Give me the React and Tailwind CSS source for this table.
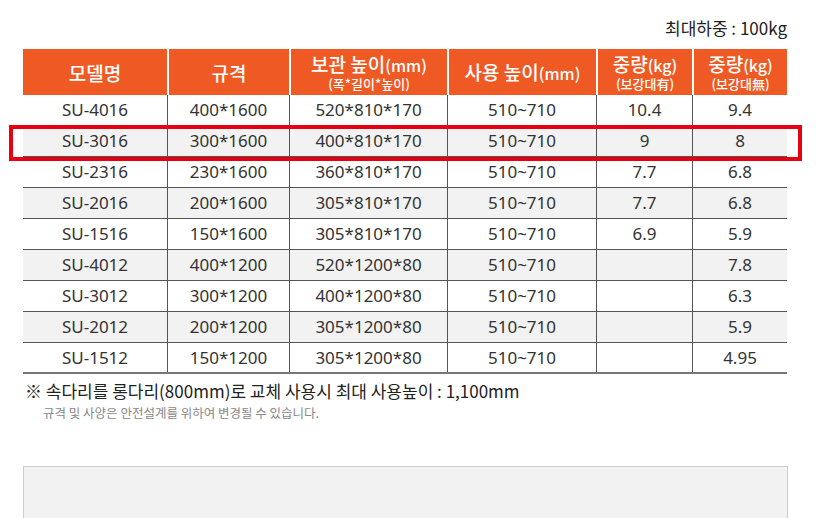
import React from "react";

const rows = [
  ["SU-4016", "400*1600", "520*810*170", "510~710", "10.4", "9.4"],
  ["SU-3016", "300*1600", "400*810*170", "510~710", "9", "8"],
  ["SU-2316", "230*1600", "360*810*170", "510~710", "7.7", "6.8"],
  ["SU-2016", "200*1600", "305*810*170", "510~710", "7.7", "6.8"],
  ["SU-1516", "150*1600", "305*810*170", "510~710", "6.9", "5.9"],
  ["SU-4012", "400*1200", "520*1200*80", "510~710", "", "7.8"],
  ["SU-3012", "300*1200", "400*1200*80", "510~710", "", "6.3"],
  ["SU-2012", "200*1200", "305*1200*80", "510~710", "", "5.9"],
  ["SU-1512", "150*1200", "305*1200*80", "510~710", "", "4.95"],
];

const grid = "grid grid-cols-[144px_122px_158px_149px_96px_95px]";
const kr = { fontFamily: '"Noto Sans CJK KR", "Noto Sans", sans-serif' };

function Head({ main, sub, first }) {
  return (
    <div
      style={kr}
      className={`bg-[#ef5a24] h-[46px] flex flex-col items-center justify-center text-white ${first ? "" : "border-l-2 border-white"}`}
    >
      <div className="text-[19px] leading-[21px] font-medium">{main}</div>
      {sub && <div className="text-[13px] leading-[16px] font-medium">{sub}</div>}
    </div>
  );
}

export default function App() {
  return (
    <div
      className="relative w-[819px] h-[518px] overflow-hidden bg-white text-[#333]"
      style={{ fontFamily: '"Noto Sans", "Noto Sans CJK KR", sans-serif' }}
    >
      <div style={kr} className="flex justify-end pr-[32px] pt-[16px] h-[49px] text-[17px] leading-[24px] text-[#222]">
        최대하중 : 100kg
      </div>
      <div className="ml-[23px] w-[764px]">
        <div className={grid}>
          <Head main="모델명" first />
          <Head main="규격" />
          <Head main={<>보관 높이<span className="text-[16px]">(mm)</span></>} sub="(폭*길이*높이)" />
          <Head main={<>사용 높이<span className="text-[16px]">(mm)</span></>} />
          <Head main={<>중량<span className="text-[16px]">(kg)</span></>} sub="(보강대有)" />
          <Head main={<>중량<span className="text-[16px]">(kg)</span></>} sub="(보강대無)" />
        </div>
        {rows.map((r, i) => (
          <div
            key={i}
            className={`${grid} h-[31px] ${i === rows.length - 1 ? "border-b-2 border-[#777]" : "border-b border-[#555]"} ${i % 2 === 1 ? "bg-[#f2f2f2]" : "bg-white"}`}
          >
            {r.map((c, j) => (
              <div
                key={j}
                className={`flex items-center justify-center text-[17px] ${j > 0 ? "border-l border-[#555]" : ""}`}
              >
                {c}
              </div>
            ))}
          </div>
        ))}
      </div>
      <div style={kr} className="pl-[25px] pt-[5px] text-[17px] leading-[24px] text-[#222]">
        ※ 속다리를 롱다리(800mm)로 교체 사용시 최대 사용높이 : 1,100mm
      </div>
      <div style={kr} className="pl-[43px] pt-[1px] text-[12.5px] leading-[17px] text-[#888]">
        규격 및 사양은 안전설계를 위하여 변경될 수 있습니다.
      </div>
      <div className="ml-[23px] mt-[45px] w-[765px] h-[80px] border border-[#ccc] bg-[#f2f2f2]" />
      <div className="absolute left-[9px] top-[125px] w-[793px] h-[36px] border-4 border-[#e60012]" />
    </div>
  );
}
